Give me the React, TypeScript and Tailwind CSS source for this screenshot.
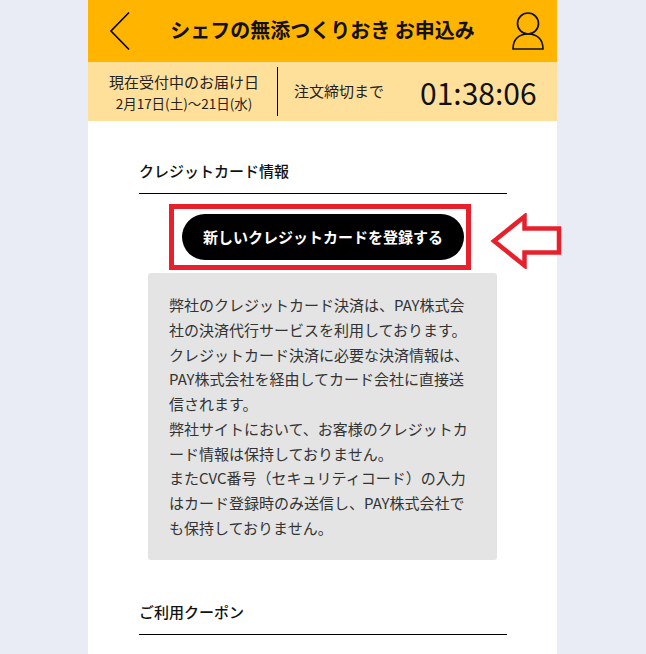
const FONT = "font-['Noto_Sans_CJK_JP','Noto_Sans',sans-serif]";

function BackIcon() {
  return (
    <svg width="24" height="40" viewBox="0 0 24 40" fill="none" stroke="#000" strokeWidth="1.6">
      <path d="M20 1.5 L2 20 L20 38.5" />
    </svg>
  );
}

function UserIcon() {
  return (
    <svg width="32" height="38" viewBox="0 0 32 38" fill="none" stroke="#111" strokeWidth="1.7">
      <circle cx="16" cy="11.5" r="10.5" />
      <path d="M1 37 C1 27 7 22 16 22 C25 22 31 27 31 37 Z" />
    </svg>
  );
}

function RedArrow() {
  return (
    <svg width="72" height="56" viewBox="0 0 72 56" fill="none" stroke="#e8202c" strokeWidth="4.5">
      <path d="M4 28 L34.5 3.5 L34.5 15.5 L69 15.5 L69 39.5 L34.5 39.5 L34.5 52.5 Z" />
    </svg>
  );
}

function SectionTitle({children}: {children: string}) {
  return (
    <div className="border-b border-black pb-[12px] text-[15px] leading-[21px] font-medium text-[#111]">
      {children}
    </div>
  );
}

export default function App() {
  return (
    <div className={`${FONT} flex h-[654px] justify-center overflow-hidden bg-[#e9ecf5]`}>
      <div className="ml-[-1px] w-[469px] bg-white">
        <header className="flex h-[62px] items-center bg-[#ffb400] pr-[13px] pl-[21px]">
          <BackIcon />
          <h1 className="mb-[2px] flex-1 text-center text-[20px] leading-[26px] font-bold text-[#111]">
            シェフの無添つくりおき お申込み
          </h1>
          <UserIcon />
        </header>

        <div className="flex h-[59px] items-center bg-[#ffe09b] text-[#222]">
          <div className="w-[189px] pl-[3px] text-center">
            <div className="text-[15px] leading-[23px]">現在受付中のお届け日</div>
            <div className="text-[13.5px] leading-[20px]">2月17日(土)〜21日(水)</div>
          </div>
          <div className="h-[49px] w-[1px] bg-black" />
          <div className="ml-[16px] text-[15px]">注文締切まで</div>
          <div className="ml-[36px] text-[30px] leading-[40px] text-[#111]">01:38:06</div>
        </div>

        <main className="pt-[39px] pr-[50px] pl-[51px]">
          <SectionTitle>クレジットカード情報</SectionTitle>
          <div className="relative">
            <div className="mt-[10px] ml-[30px] box-border w-[302px] border-[5px] border-[#e8202c] px-[8px] py-[5px]">
              <button className="block h-[46px] w-[282px] rounded-full bg-black text-[15px] font-bold text-white">
                新しいクレジットカードを登録する
              </button>
            </div>
            <div className="absolute top-[9px] left-[351px]">
              <RedArrow />
            </div>
          </div>

          <div className="mt-[3px] ml-[9px] h-[287px] w-[349px] rounded-[3px] bg-[#e4e4e4] px-[21px] pt-[20px] text-[15px] leading-[24.75px] text-[#333]">
            <p>弊社のクレジットカード決済は、PAY株式会社の決済代行サービスを利用しております。</p>
            <p>クレジットカード決済に必要な決済情報は、PAY株式会社を経由してカード会社に直接送信されます。</p>
            <p>弊社サイトにおいて、お客様のクレジットカード情報は保持しておりません。</p>
            <p>またCVC番号（セキュリティコード）の入力はカード登録時のみ送信し、PAY株式会社でも保持しておりません。</p>
          </div>

          <div className="mt-[41px]">
            <SectionTitle>ご利用クーポン</SectionTitle>
          </div>
        </main>
      </div>
    </div>
  );
}
